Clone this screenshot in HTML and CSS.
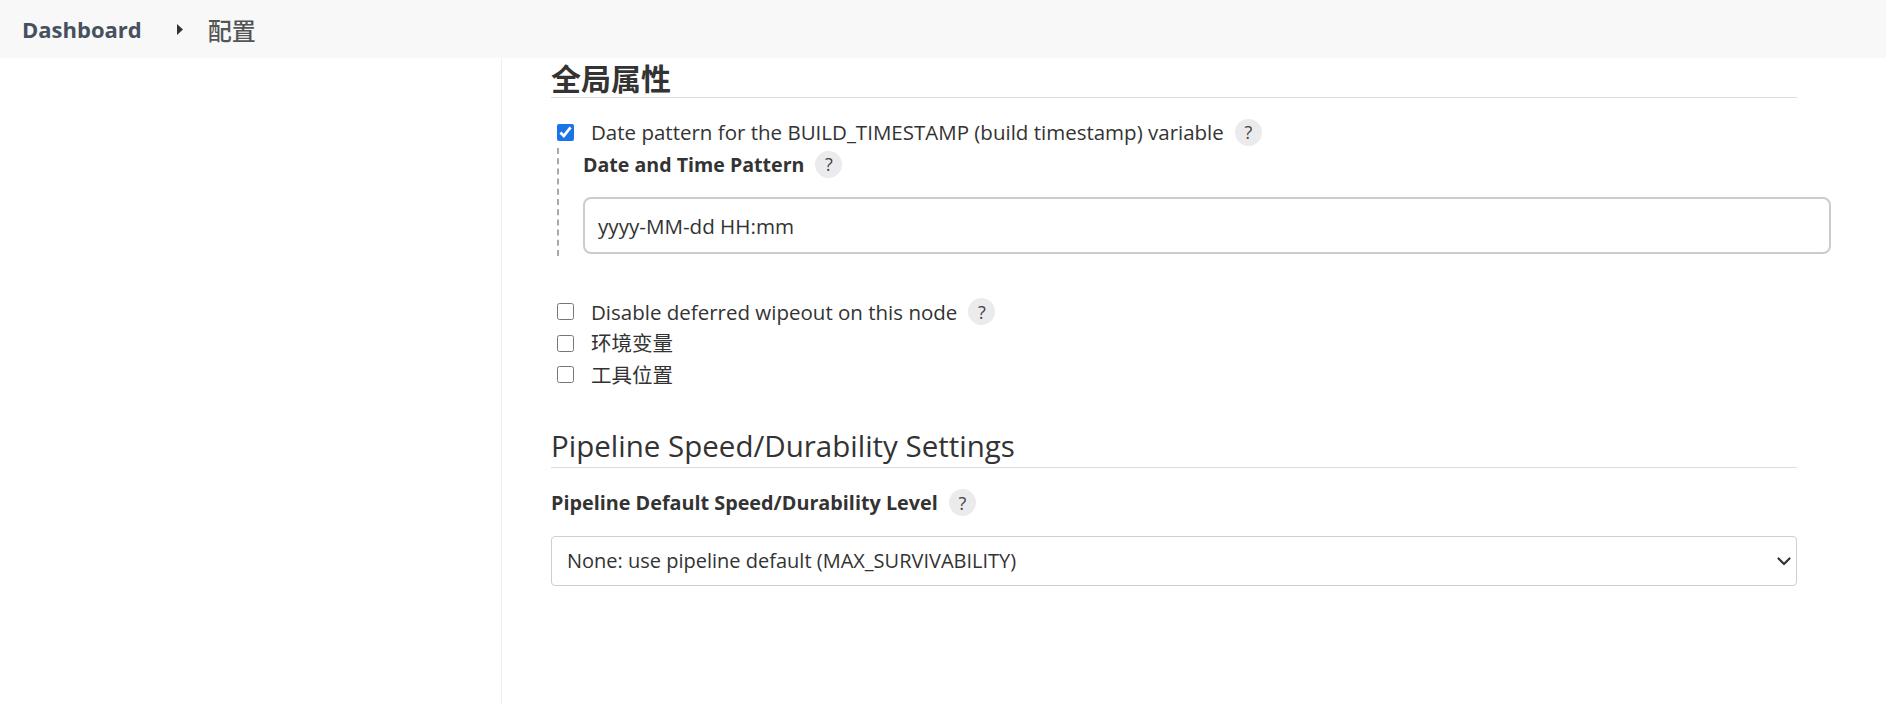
FILE: index.html
```html
<!DOCTYPE html>
<html lang="zh">
<head>
<meta charset="utf-8">
<title>配置</title>
<link rel="stylesheet" href="styles.css">
</head>
<body>
<header class="topbar">
  <a class="crumb crumb-home" href="#">Dashboard</a>
  <svg class="crumb-sep" width="6" height="11" viewBox="0 0 6 11"><polygon points="0,0 6,5.5 0,11" fill="#333"/></svg>
  <span class="crumb crumb-current">配置</span>
</header>
<div class="page">
  <aside class="sidebar"></aside>
  <main class="main">
    <section class="section">
      <h2 class="section-title section-title-cjk">全局属性</h2>
      <div class="option">
        <label class="check-row">
          <input type="checkbox" class="check" checked>
          <span class="check-label">Date pattern for the BUILD_TIMESTAMP (build timestamp) variable</span>
          <span class="help">?</span>
        </label>
        <div class="nested">
          <div class="field-label">Date and Time Pattern <span class="help">?</span></div>
          <input class="text-input" type="text" value="yyyy-MM-dd HH:mm">
        </div>
      </div>
      <div class="check-list">
        <label class="check-row">
          <input type="checkbox" class="check">
          <span class="check-label">Disable deferred wipeout on this node</span>
          <span class="help">?</span>
        </label>
        <label class="check-row">
          <input type="checkbox" class="check">
          <span class="check-label">环境变量</span>
        </label>
        <label class="check-row">
          <input type="checkbox" class="check">
          <span class="check-label">工具位置</span>
        </label>
      </div>
    </section>
    <section class="section section-pipeline">
      <h2 class="section-title">Pipeline Speed/Durability Settings</h2>
      <div class="field-label field-label-top">Pipeline Default Speed/Durability Level <span class="help">?</span></div>
      <div class="select-wrap">
        <select class="select">
          <option>None: use pipeline default (MAX_SURVIVABILITY)</option>
        </select>
        <svg class="select-arrow" width="14" height="9" viewBox="0 0 14 9"><polyline points="1.5,1.5 7,7 12.5,1.5" fill="none" stroke="#333" stroke-width="2.2" stroke-linecap="round" stroke-linejoin="round"/></svg>
      </div>
    </section>
  </main>
</div>
</body>
</html>
```

FILE: styles.css
```css
* { box-sizing: border-box; }
html, body { margin: 0; padding: 0; background: #fff; }
body {
  font-family: "Open Sans", "Noto Sans CJK SC", sans-serif;
  color: #333;
  font-size: 20px;
  height: 705px;
  overflow: hidden;
}
.topbar {
  height: 58px;
  background: #f8f8f8;
  display: flex;
  align-items: center;
  padding-left: 22px;
}
.crumb {
  font-size: 22px;
  font-weight: 700;
  text-decoration: none;
}
.crumb-home { color: #46505e; }
.crumb-sep { margin: 0 25px 0 35px; }
.crumb-current {
  font-family: "Noto Sans CJK SC", sans-serif;
  font-size: 24px;
  font-weight: 500;
  color: #555;
}
.page {
  display: flex;
  height: 647px;
}
.sidebar {
  width: 502px;
  flex: none;
  border-right: 1px solid #efefef;
}
.main {
  flex: 1;
  padding: 0 89px 0 49px;
}
.section-title {
  margin: 0;
  font-weight: 400;
  font-size: 29.5px;
  line-height: 38px;
  border-bottom: 1px solid #dcdcdc;
  padding-bottom: 2px;
}
.section-title-cjk {
  font-family: "Noto Sans CJK SC", sans-serif;
  font-weight: 700;
  font-size: 30px;
  line-height: 36px;
  margin-top: 1px;
  padding-bottom: 2px;
}
.option { margin-top: 18px; }
.check-row {
  display: flex;
  align-items: center;
  height: 32px;
  margin-left: 6px;
}
.check {
  width: 17px;
  height: 17px;
  margin: 0 17px 0 0;
  flex: none;
  accent-color: #1a73e8;
}
.check-label { line-height: 32px; font-size: 20.5px; }
.help {
  display: inline-flex;
  align-items: center;
  justify-content: center;
  width: 27px;
  height: 27px;
  border-radius: 50%;
  background: #ebebee;
  color: #444;
  font-size: 18px;
  font-weight: 400;
  margin-left: 11px;
  flex: none;
}
.nested {
  margin-left: 6px;
  border-left: 2px dashed #a9a9a9;
  padding: 0 0 2px 24px;
  margin-right: -34px;
}
.field-label {
  font-weight: 700;
  font-size: 19.6px;
  display: flex;
  align-items: center;
  height: 32px;
}
.nested .field-label { margin-top: 0; }
.text-input {
  display: block;
  width: 100%;
  height: 57px;
  margin-top: 17px;
  border: 2px solid #c8cdd1;
  border-radius: 8px;
  padding: 0 13px;
  font-family: inherit;
  font-size: 20.6px;
  color: #333;
  background: #fff;
}
.check-list { margin-top: 40px; }
.check-list .check-row { height: 31.5px; }
.section-pipeline { margin-top: 36px; }
.field-label-top { margin-top: 19px; height: 32px; font-size: 19.8px; }
.select-wrap {
  position: relative;
  margin-top: 17px;
}
.select {
  display: block;
  width: 100%;
  height: 50px;
  appearance: none;
  -webkit-appearance: none;
  border: 1px solid #cfcfcf;
  border-radius: 4px;
  background: #fff;
  padding: 0 15px;
  font-family: inherit;
  font-size: 20px;
  color: #333;
}
.select-arrow {
  position: absolute;
  right: 6px;
  top: 21px;
  pointer-events: none;
}
```
